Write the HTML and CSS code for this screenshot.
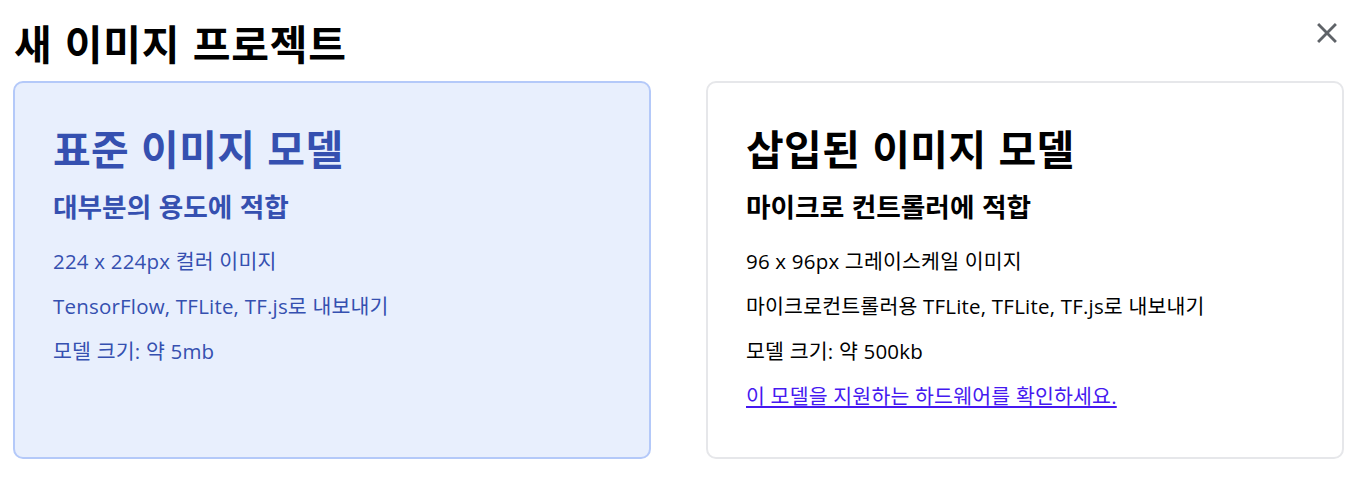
FILE: index.html
```html
<!DOCTYPE html>
<html lang="ko">
<head>
<meta charset="utf-8">
<link rel="stylesheet" href="styles.css">
</head>
<body>
<div class="dialog">
  <div class="header">
    <h1 class="title">새 이미지 프로젝트</h1>
    <button class="close" aria-label="닫기">
      <svg viewBox="0 0 24 24"><path d="M19 6.41 17.59 5 12 10.59 6.41 5 5 6.41 10.59 12 5 17.59 6.41 19 12 13.41 17.59 19 19 17.59 13.41 12z" fill="#5f6368"/></svg>
    </button>
  </div>
  <div class="cards">
    <div class="card selected">
      <h2 class="card-title">표준 이미지 모델</h2>
      <h3 class="card-sub">대부분의 용도에 적합</h3>
      <p class="line">224 x 224px 컬러 이미지</p>
      <p class="line">TensorFlow, TFLite, TF.js로 내보내기</p>
      <p class="line">모델 크기: 약 5mb</p>
    </div>
    <div class="card">
      <h2 class="card-title">삽입된 이미지 모델</h2>
      <h3 class="card-sub">마이크로 컨트롤러에 적합</h3>
      <p class="line">96 x 96px 그레이스케일 이미지</p>
      <p class="line">마이크로컨트롤러용 TFLite, TFLite, TF.js로 내보내기</p>
      <p class="line">모델 크기: 약 500kb</p>
      <p class="line"><a class="link" href="#">이 모델을 지원하는 하드웨어를 확인하세요.</a></p>
    </div>
  </div>
</div>
</body>
</html>
```
FILE: styles.css
```css
html, body {
  margin: 0;
  padding: 0;
  background: #ffffff;
}
body {
  font-family: "Noto Sans CJK KR", "Noto Sans", sans-serif;
  color: #000;
}
.dialog {
  padding: 18px 7px 0 13px;
}
.header {
  display: flex;
  justify-content: space-between;
  align-items: flex-start;
  height: 63px;
}
.title {
  margin: 0 0 0 1px;
  font-size: 41px;
  line-height: 48px;
  font-weight: 700;
  letter-spacing: 0.8px;
}
.close {
  border: none;
  background: none;
  padding: 0;
  margin: -2px 0 0 0;
  width: 34px;
  height: 34px;
  display: flex;
  align-items: center;
  justify-content: center;
  cursor: pointer;
}
.close svg {
  width: 34px;
  height: 34px;
}
.cards {
  display: grid;
  grid-template-columns: 638px 638px;
  column-gap: 55px;
}
.card {
  box-sizing: border-box;
  height: 378px;
  border: 2px solid #e6e7ea;
  border-radius: 10px;
  background: #fff;
  padding: 42px 38px 0 38px;
  color: #000;
}
.card.selected {
  border-color: #b4c9f9;
  background: #e8effd;
  color: #3550b0;
}
.card-title {
  margin: 0;
  font-size: 41px;
  line-height: 44px;
  font-weight: 700;
  letter-spacing: 0.4px;
}
.card-sub {
  margin: 22px 0 0 0;
  font-size: 26.7px;
  line-height: 30px;
  font-weight: 700;
}
.line {
  margin: 17px 0 0 0;
  font-family: "Open Sans", "Noto Sans CJK KR", sans-serif;
  font-size: 20.5px;
  line-height: 28px;
  font-weight: 400;
  letter-spacing: 0.2px;
}
.card-sub + .line {
  margin-top: 26px;
}
.link {
  color: #4519f0;
  text-decoration: underline;
}
```
